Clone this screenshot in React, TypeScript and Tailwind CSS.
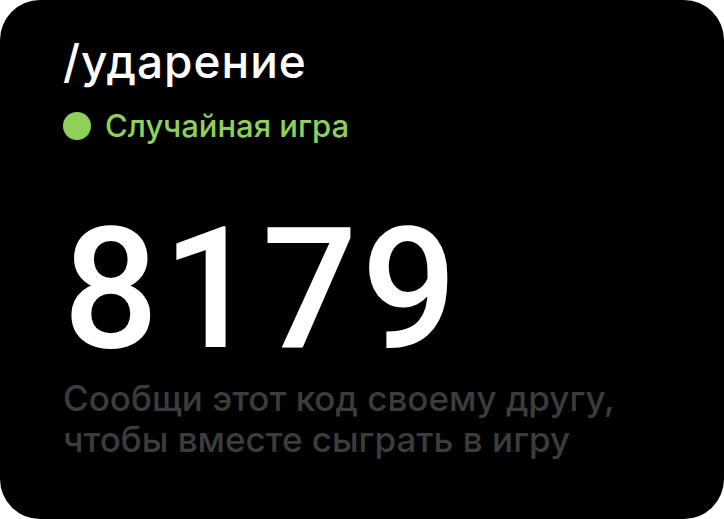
export default function App() {
  return (
    <div className="h-[519px] w-[724px] bg-white">
      <div
        className="flex h-full w-full flex-col rounded-[40px] bg-black pl-[63px] pt-[36px]"
        style={{ fontFamily: "Inter, 'Noto Sans', sans-serif" }}
      >
        {/* title */}
        <h1 className="text-[46px] leading-[50px] font-medium tracking-[1px] text-white">/ударение</h1>

        {/* mode */}
        <div className="mt-[20px] flex items-center gap-[14px]">
          <span className="mb-[1px] h-[28px] w-[28px] rounded-full bg-[#8fd158]" />
          <span className="text-[31px] leading-[40px] font-medium text-[#8fd158]">Случайная игра</span>
        </div>

        {/* code */}
        <div
          className="mt-[60px] text-[168px] leading-none font-medium tracking-[4px] text-white"
          style={{ fontFamily: "Roboto, sans-serif" }}
        >
          8179
        </div>

        <p className="mt-[4px] text-[35px] leading-[41px] font-medium text-[#3c3c3c]">
          Сообщи этот код своему другу,
          <br />
          чтобы вместе сыграть в игру
        </p>
      </div>
    </div>
  );
}
